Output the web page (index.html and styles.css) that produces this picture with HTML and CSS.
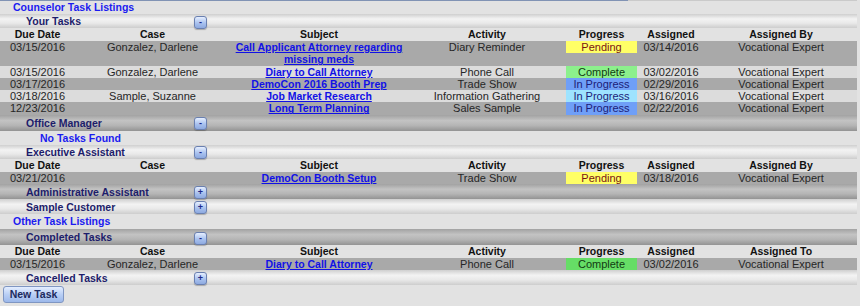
FILE: index.html
```html
<!DOCTYPE html>
<html>
<head>
<meta charset="utf-8">
<link rel="stylesheet" href="styles.css">
</head>
<body>
<div class="panel">
  <div class="top-rule"><span class="top-rule-tab"></span></div>
  <div class="section-title">Counselor Task Listings</div>

  <div class="bar light"><span class="bar-label">Your Tasks</span><span class="toggle">-</span></div>
  <table class="tasks">
    <colgroup><col class="c-due"><col class="c-case"><col class="c-subj"><col class="c-act"><col class="c-prog"><col class="c-asg"><col class="c-by"></colgroup>
    <thead><tr><th>Due Date</th><th>Case</th><th>Subject</th><th>Activity</th><th>Progress</th><th>Assigned</th><th>Assigned By</th></tr></thead>
    <tbody>
      <tr class="dark"><td class="top">03/15/2016</td><td class="top">Gonzalez, Darlene</td><td><a href="#">Call Applicant Attorney regarding missing meds</a></td><td class="top">Diary Reminder</td><td class="top"><span class="prog pending">Pending</span></td><td class="top">03/14/2016</td><td class="top">Vocational Expert</td></tr>
      <tr class="lite"><td>03/15/2016</td><td>Gonzalez, Darlene</td><td><a href="#">Diary to Call Attorney</a></td><td>Phone Call</td><td><span class="prog complete-l">Complete</span></td><td>03/02/2016</td><td>Vocational Expert</td></tr>
      <tr class="dark"><td>03/17/2016</td><td></td><td><a href="#">DemoCon 2016 Booth Prep</a></td><td>Trade Show</td><td><span class="prog inprog-d">In Progress</span></td><td>02/29/2016</td><td>Vocational Expert</td></tr>
      <tr class="lite"><td>03/18/2016</td><td>Sample, Suzanne</td><td><a href="#">Job Market Research</a></td><td>Information Gathering</td><td><span class="prog inprog-l">In Progress</span></td><td>03/16/2016</td><td>Vocational Expert</td></tr>
      <tr class="dark"><td>12/23/2016</td><td></td><td><a href="#">Long Term Planning</a></td><td>Sales Sample</td><td><span class="prog inprog-d">In Progress</span></td><td>02/22/2016</td><td>Vocational Expert</td></tr>
    </tbody>
  </table>

  <div class="bar dark-bar tall"><span class="bar-label">Office Manager</span><span class="toggle">-</span></div>
  <div class="empty">No Tasks Found</div>

  <div class="bar light"><span class="bar-label">Executive Assistant</span><span class="toggle">-</span></div>
  <table class="tasks">
    <colgroup><col class="c-due"><col class="c-case"><col class="c-subj"><col class="c-act"><col class="c-prog"><col class="c-asg"><col class="c-by"></colgroup>
    <thead><tr><th>Due Date</th><th>Case</th><th>Subject</th><th>Activity</th><th>Progress</th><th>Assigned</th><th>Assigned By</th></tr></thead>
    <tbody>
      <tr class="dark"><td>03/21/2016</td><td></td><td><a href="#">DemoCon Booth Setup</a></td><td>Trade Show</td><td><span class="prog pending">Pending</span></td><td>03/18/2016</td><td>Vocational Expert</td></tr>
    </tbody>
  </table>

  <div class="bar dark-bar"><span class="bar-label">Administrative Assistant</span><span class="toggle">+</span></div>
  <div class="bar light roomy"><span class="bar-label">Sample Customer</span><span class="toggle">+</span></div>

  <div class="section-title other">Other Task Listings</div>
  <div class="bar dark-bar tall"><span class="bar-label">Completed Tasks</span><span class="toggle">-</span></div>
  <table class="tasks">
    <colgroup><col class="c-due"><col class="c-case"><col class="c-subj"><col class="c-act"><col class="c-prog"><col class="c-asg"><col class="c-by"></colgroup>
    <thead><tr><th>Due Date</th><th>Case</th><th>Subject</th><th>Activity</th><th>Progress</th><th>Assigned</th><th>Assigned To</th></tr></thead>
    <tbody>
      <tr class="dark"><td>03/15/2016</td><td>Gonzalez, Darlene</td><td><a href="#">Diary to Call Attorney</a></td><td>Phone Call</td><td><span class="prog complete-d">Complete</span></td><td>03/02/2016</td><td>Vocational Expert</td></tr>
    </tbody>
  </table>
  <div class="bar light roomy"><span class="bar-label">Cancelled Tasks</span><span class="toggle">+</span></div>

  <div class="actions"><button class="new-task" type="button">New Task</button></div>
</div>
</body>
</html>
```

FILE: styles.css
```css
html, body {
  margin: 0;
  padding: 0;
  background: #e2e2e2;
}
body {
  font-family: "Liberation Sans", Arial, sans-serif;
  font-size: 11px;
  color: #262626;
}
.panel {
  width: 857px;
}
.top-rule {
  display: flex;
  height: 1px;
  background: #cacaca;
}
.top-rule-tab {
  width: 628px;
  background: #8193b4;
}
.section-title {
  height: 13px;
  line-height: 13px;
  padding-left: 13px;
  font-weight: bold;
  font-size: 10.5px;
  color: #1b1bf0;
}
.section-title.other {
  height: 15px;
  line-height: 15px;
}
.bar {
  display: flex;
  align-items: center;
  height: 14px;
  font-weight: bold;
  font-size: 10.5px;
  color: #1d1d6b;
}
.bar.light {
  background: linear-gradient(#cfcfcf 0%, #f3f3f3 35%, #e9e9e9 65%, #cdcdcd 100%);
}
.bar.dark-bar {
  height: 15px;
  background: linear-gradient(#a2a2a2 0%, #c3c3c3 35%, #b5b5b5 65%, #939393 100%);
}
.bar.roomy {
  height: 15px;
}
.bar.tall {
  height: 16px;
}
.bar-label {
  width: 194px;
  padding-left: 26px;
  box-sizing: border-box;
  white-space: nowrap;
  line-height: 12px;
}
.toggle {
  width: 11px;
  height: 11px;
  margin-top: 2px;
  border: 1px solid #6a80b0;
  border-radius: 3px;
  background: linear-gradient(#e6efff, #a9c2ef 55%, #8eaae0);
  box-shadow: 0 1px 1px rgba(0, 0, 0, 0.25);
  color: #1e2a8a;
  font-size: 9px;
  font-weight: bold;
  line-height: 11px;
  text-align: center;
}
.tasks {
  width: 857px;
  border-collapse: collapse;
  table-layout: fixed;
}
.c-due { width: 75px; }
.c-case { width: 155px; }
.c-subj { width: 178px; }
.c-act { width: 158px; }
.c-prog { width: 71px; }
.c-asg { width: 68px; }
.c-by { width: 152px; }
.tasks th {
  height: 13px;
  padding: 0;
  line-height: 13px;
  font-weight: bold;
  font-size: 10.5px;
  color: #111;
  text-align: center;
}
.tasks td {
  padding: 0;
  line-height: 12.3px;
  text-align: center;
  white-space: nowrap;
}
.tasks td.top {
  vertical-align: top;
}
.tasks td:nth-child(3) {
  white-space: normal;
}
.tasks tr.dark td { background: #a9a9a9; }
.tasks tr.lite td { background: #dcdcdc; }
.tasks a {
  color: #1111e6;
  font-weight: bold;
  font-size: 10.5px;
  text-decoration: underline;
}
.prog {
  display: block;
  height: 12.3px;
}
.tasks td:nth-child(5) { vertical-align: top; }
.pending { background: #ffff66; color: #7a1212; }
.complete-l { background: #8cf08c; color: #123a12; }
.complete-d { background: #66dd66; color: #123a12; }
.inprog-d { background: #6f9ff7; color: #1c1c78; }
.inprog-l { background: #9ee3ff; color: #1c1c78; }
.empty {
  height: 14px;
  line-height: 14px;
  padding-left: 40px;
  font-weight: bold;
  font-size: 10.5px;
  color: #1b1bf0;
}
.actions {
  padding: 1px 0 0 3px;
}
.new-task {
  width: 61px;
  height: 17px;
  padding: 0;
  border: 1px solid #7f96c2;
  border-radius: 3px;
  background: linear-gradient(#e4eeff, #b9cff5 50%, #9cb8ea);
  font-family: "Liberation Sans", Arial, sans-serif;
  font-weight: bold;
  font-size: 10.5px;
  color: #1d2a5e;
  line-height: 15px;
}
```
